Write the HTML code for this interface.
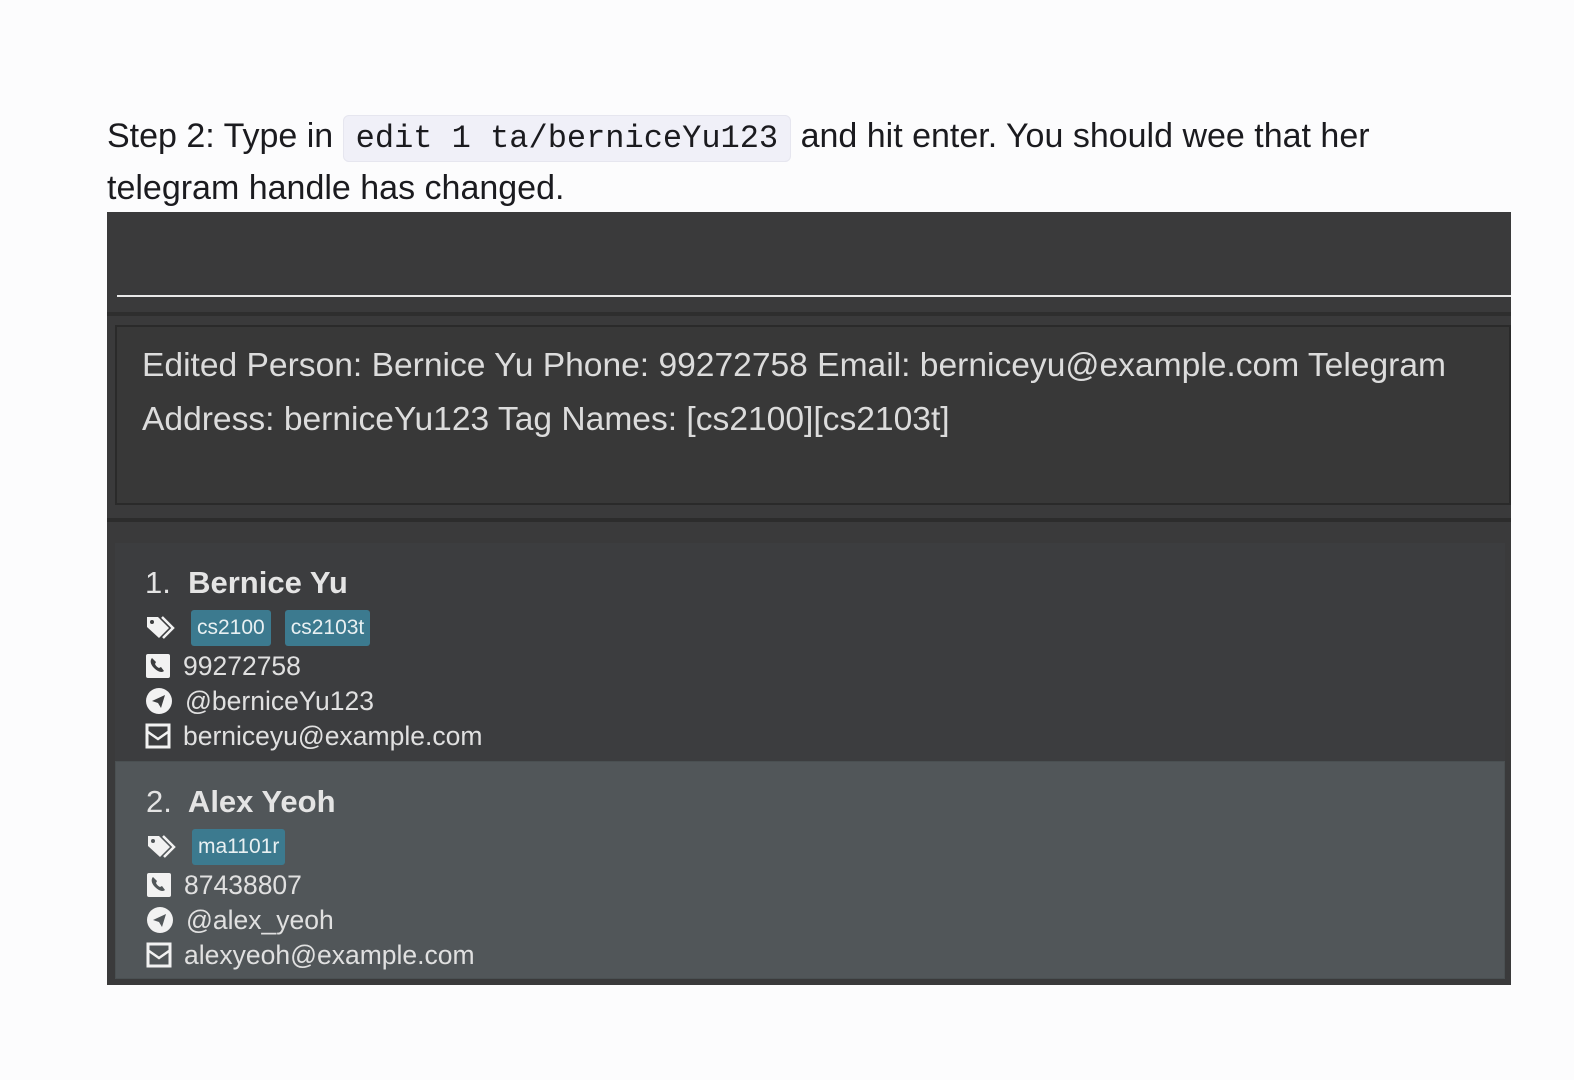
<!DOCTYPE html>
<html><head><meta charset="utf-8"><style>
html,body{margin:0;padding:0;}
body{width:1574px;height:1080px;background:#fcfcfd;position:relative;overflow:hidden;font-family:"Liberation Sans",sans-serif;}
.p{position:absolute;left:107px;font-size:34px;color:#1b1b1f;white-space:nowrap;}
code{font-family:"Liberation Mono",monospace;font-size:32px;background:#f0f0f8;border:1px solid #e6e6ef;border-radius:6px;padding:4px 12px;color:#1b1b1f;}
.app{position:absolute;left:107px;top:212px;width:1404px;height:773px;background:#3a3a3b;overflow:hidden;}
.abs{position:absolute;}
.res{color:#dcdcdc;font-size:33.6px;white-space:nowrap;}
.card{position:absolute;left:8px;width:1390px;}
.name{position:absolute;left:30px;font-size:31px;font-weight:bold;color:#e4e4e4;}
.row{position:absolute;left:30px;height:30px;display:flex;align-items:center;color:#e0e0e0;font-size:26.5px;}
.row svg{margin-right:12px;}
.tag{background:#3c7a8f;color:#e8f0f2;font-size:21px;padding:3px 6px;border-radius:3px;margin-right:14px;height:30px;line-height:30px;}
</style></head><body>
<div class="p" style="top:112px;line-height:48px;">Step 2: Type in <code>edit 1 ta/berniceYu123</code> and hit enter. You should wee that her</div>
<div class="p" style="top:164px;line-height:48px;">telegram handle has changed.</div>

<div class="app">
  <div class="abs" style="left:10px;top:83px;width:1394px;height:2px;background:#e8e8e8;"></div>
  <div class="abs" style="left:0;top:100px;width:1404px;height:4px;background:#2e2e2e;"></div>
  <div class="abs" style="left:8px;top:113px;width:1396px;height:180px;background:#383838;border:2px solid #2a2a2a;box-sizing:border-box;"></div>
  <div class="abs res" style="left:35px;top:127px;line-height:54px;">Edited Person: Bernice Yu Phone: 99272758 Email: berniceyu@example.com Telegram<br>Address: berniceYu123 Tag Names: [cs2100][cs2103t]</div>
  <div class="abs" style="left:0;top:306px;width:1404px;height:4px;background:#2c2c2c;"></div>

  <div class="card" style="top:331px;height:218px;background:#3c3d3f;">
    <div class="name" style="top:22px;"><span style="font-weight:normal;">1.</span>&nbsp; Bernice Yu</div>
    <div class="row" style="top:70px;"><svg width="34" height="28" viewBox="0 0 34 28"><path d="M2 3h11l11 11-10 10L2 13z" fill="#f2f2f2"/><circle cx="7" cy="8" r="2" fill="#3c3d3f"/><path d="M17 3l11 11-10 10" stroke="#f2f2f2" stroke-width="2.5" fill="none"/></svg><span class="tag">cs2100</span><span class="tag">cs2103t</span></div>
    <div class="row" style="top:108px;"><svg width="26" height="26" viewBox="0 0 26 26"><rect x="1" y="1" width="24" height="24" rx="2" fill="#f2f2f2"/><path d="M7 5c-2 2-2 6 2 10s8 5 10 3l-3-4-2 1c-2-1-3-2-4-4l1-2z" fill="#3c3d3f"/></svg>99272758</div>
    <div class="row" style="top:143px;"><svg width="28" height="28" viewBox="0 0 28 28"><circle cx="14" cy="14" r="13" fill="#f2f2f2"/><path d="M7 14l13-6-4 13-3-5z" fill="#3c3d3f"/></svg>@berniceYu123</div>
    <div class="row" style="top:178px;"><svg width="26" height="26" viewBox="0 0 26 26"><rect x="2" y="2" width="22" height="22" fill="none" stroke="#f2f2f2" stroke-width="3"/><path d="M3 9l10 7 10-7" fill="none" stroke="#f2f2f2" stroke-width="2.5"/></svg>berniceyu@example.com</div>
  </div>

  <div class="card" style="top:549px;height:218px;background:#515659;border:1px solid #4a5052;box-sizing:border-box;">
    <div class="name" style="top:22px;"><span style="font-weight:normal;">2.</span>&nbsp; Alex Yeoh</div>
    <div class="row" style="top:70px;"><svg width="34" height="28" viewBox="0 0 34 28"><path d="M2 3h11l11 11-10 10L2 13z" fill="#f2f2f2"/><circle cx="7" cy="8" r="2" fill="#515659"/><path d="M17 3l11 11-10 10" stroke="#f2f2f2" stroke-width="2.5" fill="none"/></svg><span class="tag">ma1101r</span></div>
    <div class="row" style="top:108px;"><svg width="26" height="26" viewBox="0 0 26 26"><rect x="1" y="1" width="24" height="24" rx="2" fill="#f2f2f2"/><path d="M7 5c-2 2-2 6 2 10s8 5 10 3l-3-4-2 1c-2-1-3-2-4-4l1-2z" fill="#515659"/></svg>87438807</div>
    <div class="row" style="top:143px;"><svg width="28" height="28" viewBox="0 0 28 28"><circle cx="14" cy="14" r="13" fill="#f2f2f2"/><path d="M7 14l13-6-4 13-3-5z" fill="#515659"/></svg>@alex_yeoh</div>
    <div class="row" style="top:178px;"><svg width="26" height="26" viewBox="0 0 26 26"><rect x="2" y="2" width="22" height="22" fill="none" stroke="#f2f2f2" stroke-width="3"/><path d="M3 9l10 7 10-7" fill="none" stroke="#f2f2f2" stroke-width="2.5"/></svg>alexyeoh@example.com</div>
  </div>
</div>
</body></html>
